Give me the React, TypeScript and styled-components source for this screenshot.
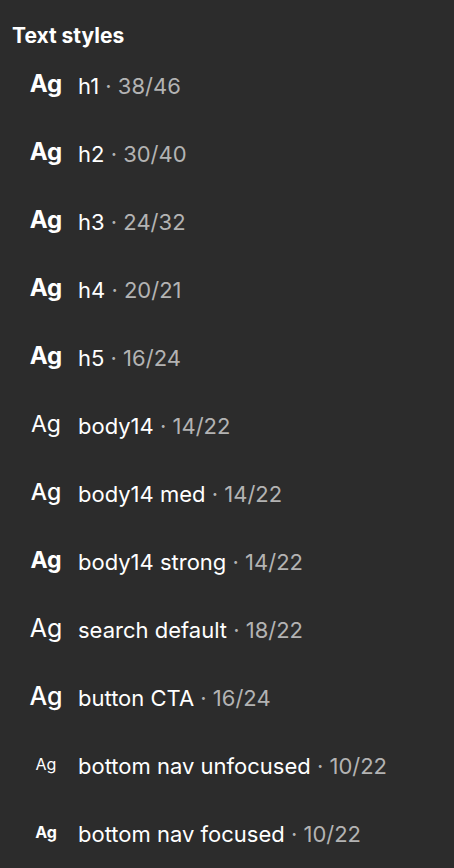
import React from 'react';
import styled, { createGlobalStyle } from 'styled-components';

// 텍스트 스타일 한 줄의 타입
interface TextStyleItem {
  name: string;
  spec: string;
  size: number;
  weight: number;
}

const GlobalStyle = createGlobalStyle`
  html, body {
    margin: 0;
    padding: 0;
    background: #2c2c2c;
  }
  body {
    font-family: Inter, "Noto Sans", sans-serif;
    -webkit-font-smoothing: antialiased;
  }
`;

const Panel = styled.div`
  width: 454px;
  height: 868px;
  background: #2c2c2c;
  display: flex;
  flex-direction: column;
  overflow: hidden;
`;

const Title = styled.h2`
  margin: 0;
  height: 52px;
  padding: 0 12px 4px;
  box-sizing: border-box;
  display: flex;
  align-items: flex-end;
  font-size: 21px;
  font-weight: 700;
  line-height: 24px;
  color: #ffffff;
`;

const List = styled.div`
  display: flex;
  flex-direction: column;
`;

const Row = styled.div`
  height: 68px;
  display: flex;
  align-items: center;
  padding-left: 26px;
  gap: 12px;
`;

interface PreviewProps {
  $size: number;
  $weight: number;
}

const Preview = styled.span<PreviewProps>`
  width: 40px;
  text-align: center;
  font-size: ${props => props.$size}px;
  font-weight: ${props => props.$weight};
  color: #ffffff;
  line-height: 1;
  flex-shrink: 0;
  margin-top: -4px;
`;

const Label = styled.span`
  font-size: 22px;
  color: #ffffff;
  white-space: nowrap;
`;

const Spec = styled.span`
  color: #b3b3b3;
`;

const styles: TextStyleItem[] = [
  { name: 'h1', spec: '38/46', size: 24, weight: 700 },
  { name: 'h2', spec: '30/40', size: 24, weight: 700 },
  { name: 'h3', spec: '24/32', size: 24, weight: 700 },
  { name: 'h4', spec: '20/21', size: 24, weight: 700 },
  { name: 'h5', spec: '16/24', size: 24, weight: 700 },
  { name: 'body14', spec: '14/22', size: 23, weight: 400 },
  { name: 'body14 med', spec: '14/22', size: 23, weight: 500 },
  { name: 'body14 strong', spec: '14/22', size: 23, weight: 700 },
  { name: 'search default', spec: '18/22', size: 25, weight: 400 },
  { name: 'button CTA', spec: '16/24', size: 25, weight: 500 },
  { name: 'bottom nav unfocused', spec: '10/22', size: 16, weight: 400 },
  { name: 'bottom nav focused', spec: '10/22', size: 16, weight: 700 },
];

const App: React.FC = () => {
  return (
    <>
      <GlobalStyle />
      <Panel>
        <Title>Text styles</Title>
        <List>
          {styles.map((s) => (
            <Row key={s.name}>
              <Preview $size={s.size} $weight={s.weight}>Ag</Preview>
              <Label>
                {s.name} <Spec>· {s.spec}</Spec>
              </Label>
            </Row>
          ))}
        </List>
      </Panel>
    </>
  );
};

export default App;
